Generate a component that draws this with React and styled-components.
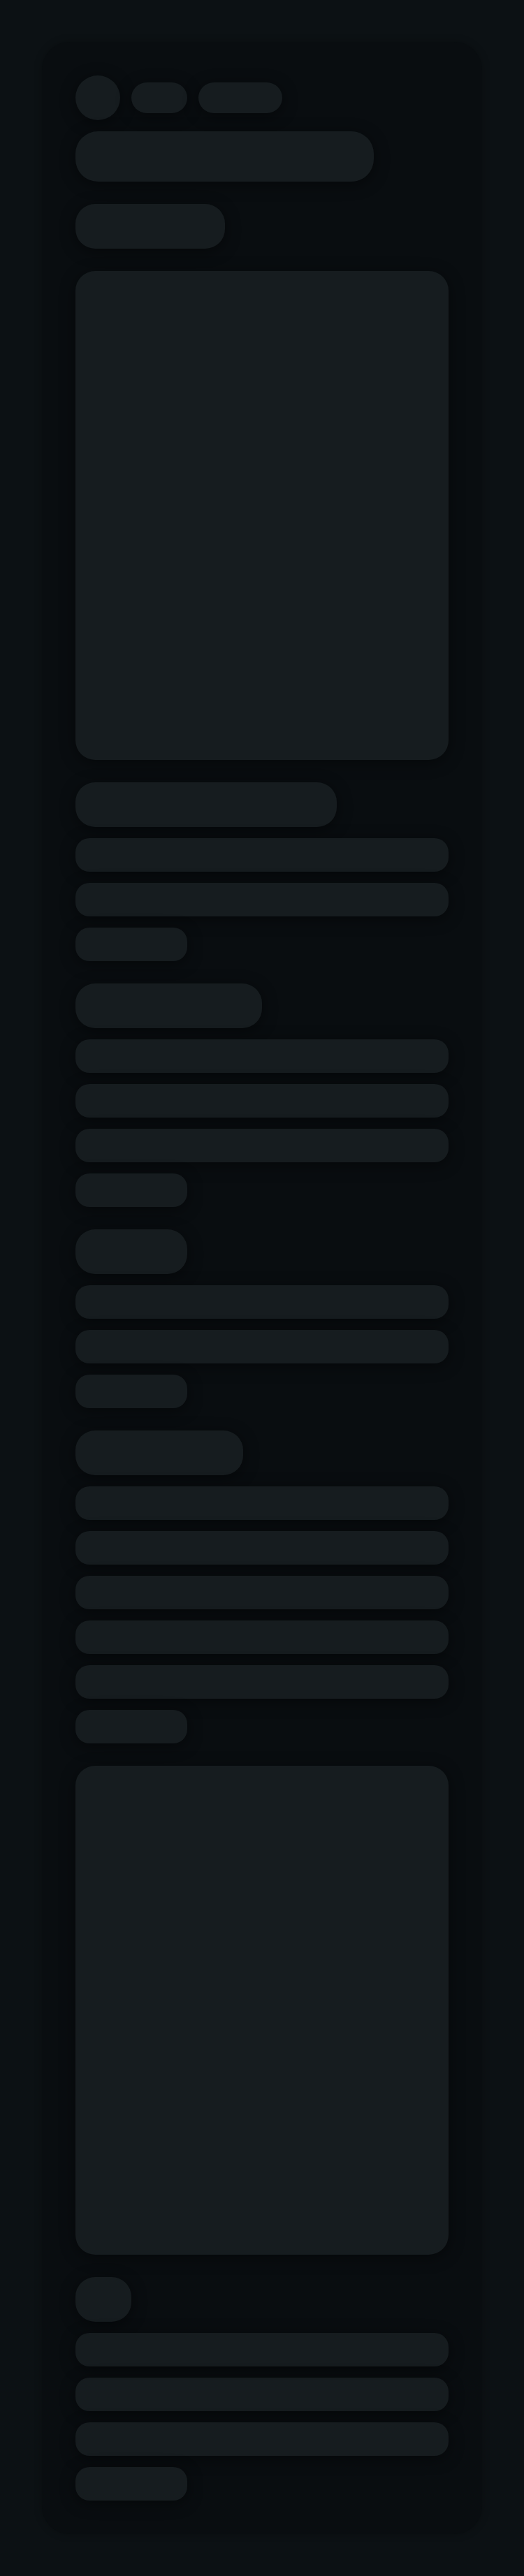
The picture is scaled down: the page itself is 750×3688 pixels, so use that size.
import React from "react";
import styled, { createGlobalStyle } from "styled-components";

const GlobalStyle = createGlobalStyle`
  html, body {
    margin: 0;
    padding: 0;
    background: #0c1114;
    font-family: "Inter", "Liberation Sans", sans-serif;
  }
`;

const Page = styled.div`
  min-height: 3688px;
  box-sizing: border-box;
  padding: 60px 60px;
  background: #0c1114;
`;

const Card = styled.div`
  background: #090d10;
  border-radius: 40px;
  padding: 48px;
  display: flex;
  flex-direction: column;
  box-shadow: 0 0 12px rgba(0, 0, 0, 0.25);
`;

const Bone = styled.div`
  background: #161c1f;
  width: ${(props) => props.$w || "100%"};
  height: ${(props) => props.$h || 48}px;
  border-radius: ${(props) => props.$r || 20}px;
  flex-shrink: 0;
  box-shadow: 0 4px 22px rgba(0, 0, 0, 0.45);
`;

const MetaRow = styled.div`
  display: flex;
  align-items: center;
  gap: 16px;
`;

const Hero = styled.div`
  display: flex;
  flex-direction: column;
  gap: 32px;
  margin-top: 16px;
`;

const Section = styled.section`
  display: flex;
  flex-direction: column;
  gap: 16px;
  margin-top: 32px;
`;

const Media = styled(Bone)`
  margin-top: 32px;
  height: 700px;
  border-radius: 28px;
`;

const sections = [
  { head: "70%", lines: 2 },
  { head: "50%", lines: 3 },
  { head: "30%", lines: 2 },
  { head: "45%", lines: 5 },
];

function TextBlock({ head, lines }) {
  return (
    <Section>
      <Bone $w={head} $h={64} $r={28} />
      {Array.from({ length: lines }).map((_, i) => (
        <Bone key={i} />
      ))}
      <Bone $w="30%" />
    </Section>
  );
}

export default function App() {
  return (
    <>
      <GlobalStyle />
      <Page>
        <Card>
          <MetaRow>
            <Bone $w="64px" $h={64} $r={32} />
            <Bone $w="80px" $h={44} $r={22} />
            <Bone $w="120px" $h={44} $r={22} />
          </MetaRow>
          <Hero>
            <Bone $w="80%" $h={72} $r={32} />
            <Bone $w="40%" $h={64} $r={28} />
          </Hero>
          <Media />
          {sections.map((s, i) => (
            <TextBlock key={i} head={s.head} lines={s.lines} />
          ))}
          <Media />
          <TextBlock head="15%" lines={3} />
        </Card>
      </Page>
    </>
  );
}
